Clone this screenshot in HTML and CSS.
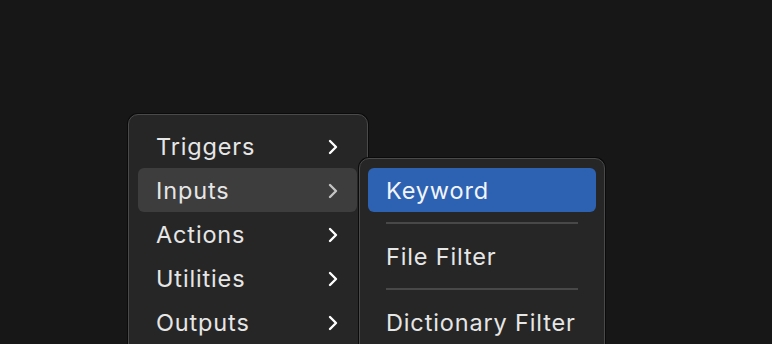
FILE: index.html
```html
<!DOCTYPE html>
<html lang="en">
<head>
    <meta charset="UTF-8">
    <title>Menu</title>
    <link rel="stylesheet" href="styles.css">
</head>
<body>
    <div class="stage">
        <ul class="menu">
            <li class="menu__item">Triggers
                <svg class="chevron" viewBox="0 0 10 16"><path d="M2 2 L8 8 L2 14"/></svg>
            </li>
            <li class="menu__item menu__item--open">Inputs
                <svg class="chevron" viewBox="0 0 10 16"><path d="M2 2 L8 8 L2 14"/></svg>
            </li>
            <li class="menu__item">Actions
                <svg class="chevron" viewBox="0 0 10 16"><path d="M2 2 L8 8 L2 14"/></svg>
            </li>
            <li class="menu__item">Utilities
                <svg class="chevron" viewBox="0 0 10 16"><path d="M2 2 L8 8 L2 14"/></svg>
            </li>
            <li class="menu__item">Outputs
                <svg class="chevron" viewBox="0 0 10 16"><path d="M2 2 L8 8 L2 14"/></svg>
            </li>
        </ul>
        <ul class="menu submenu">
            <li class="menu__item menu__item--active">Keyword</li>
            <li class="menu__sep"></li>
            <li class="menu__item">File Filter</li>
            <li class="menu__sep"></li>
            <li class="menu__item">Dictionary Filter</li>
        </ul>
    </div>
</body>
</html>
```

FILE: styles.css
```css
* { margin: 0; padding: 0; box-sizing: border-box; }
html, body { height: 100%; overflow: hidden; }
body {
    background: #171717;
    font: 23.5px Inter, "Noto Sans", sans-serif;
    letter-spacing: 0.85px;
    color: #e6e6e6;
}
ul{
    list-style: none;
}
.stage{
    display: flex;
    align-items: flex-start;
    padding: 114px 0 0 128px;
}
.menu{
    width: 240px;
    padding: 9px 10px 9px 9px;
    background: #262626;
    border: 1px solid #4a4a4a;
    border-radius: 10px;
    box-shadow: 0 0 0 1px #0b0b0b;
}
.menu__item{
    height: 44px;
    display: flex;
    align-items: center;
    justify-content: space-between;
    padding: 1px 19px 0 18px;
    border-radius: 6px;
}
.menu__item--open{
    background: #3d3d3d;
}
.menu__item--open .chevron{
    stroke: #c4c4c4;
}
.chevron{
    width: 10px;
    height: 16px;
    fill: none;
    stroke: #ffffff;
    stroke-width: 2.4;
    stroke-linecap: round;
    stroke-linejoin: round;
}
.submenu{
    position: relative;
    width: 246px;
    margin: 44px 0 0 -9px;
    padding: 9px 8px;
}
.menu__item--active{
    background: #2d62b2;
    color: #f2f5fb;
}
.menu__sep{
    height: 2px;
    margin: 10px 18px;
    background: #484848;
}
```
